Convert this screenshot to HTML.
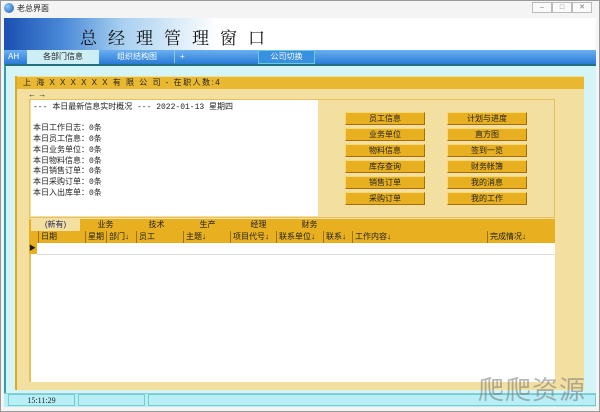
<!DOCTYPE html>
<html><head><meta charset="utf-8"><style>
*{margin:0;padding:0;box-sizing:border-box}
body{width:600px;height:412px;background:#f0f0f0;position:relative;overflow:hidden;font-family:"Liberation Sans","Noto Sans CJK SC",sans-serif;font-size:9px;color:#222}
.a{position:absolute}
.btn{position:absolute;width:80px;height:13px;background:#e8b020;border-right:1px solid #a07010;border-bottom:1px solid #a07010;border-top:1px solid #f8d870;border-left:1px solid #f8d870;text-align:center;line-height:11px;font-size:8px;color:#222}
.hc{position:absolute;top:0;height:12px;border-left:1px solid #a07010;line-height:12px;font-size:8px;padding-left:2px}
.tb{position:absolute;top:0;height:12px;line-height:12px;text-align:center;font-size:8px;background:#e8b020}
.wc{position:absolute;top:2px;width:20px;height:11px;border:1px solid #bbb;background:#fafafa;font-size:7px;color:#777;text-align:center;line-height:9px}
</style></head><body>
<div class="a" style="left:0;top:0;width:600px;height:412px;border:1px solid #999;background:#f4f4f4"></div>
<div class="a" style="left:4px;top:3px;width:10px;height:10px;border-radius:50%;background:radial-gradient(circle at 35% 35%,#8cf,#25a)"></div>
<div class="a" style="left:17px;top:3px;font-size:8px">老总界面</div>
<div class="wc" style="left:532px">–</div><div class="wc" style="left:552px">□</div><div class="wc" style="left:572px">✕</div>
<div class="a" style="left:4px;top:18px;width:592px;height:32px;background:linear-gradient(90deg,#1a4fb0 0%,#4a8ad8 10%,#a8d0f0 20%,#ffffff 36%,#ffffff 100%)"></div>
<div class="a" style="left:80px;top:24px;font-family:'Liberation Serif','Noto Serif CJK SC',serif;font-size:17px;letter-spacing:11px;color:#111">总经理管理窗口</div>
<div class="a" style="left:4px;top:50px;width:592px;height:14px;background:linear-gradient(#6ab0f0,#2a7ad8)"></div>
<div class="a" style="left:8px;top:52px;font-size:8px;color:#fff">AH</div>
<div class="a" style="left:27px;top:50px;width:72px;height:14px;background:#cdeef5;text-align:center;line-height:14px;font-size:8px">各部门信息</div>
<div class="a" style="left:100px;top:51px;width:75px;height:12px;text-align:center;line-height:12px;font-size:8px;color:#fff;border-right:1px solid #8cc">组织结构图</div>
<div class="a" style="left:180px;top:52px;font-size:8px;color:#fff">+</div>
<div class="a" style="left:258px;top:50px;width:57px;height:14px;background:#3a90e0;border:1px solid #6cd;text-align:center;line-height:12px;font-size:8px;color:#fff">公司切换</div>
<div class="a" style="left:4px;top:64px;width:592px;height:329px;background:#d4f4f6;border-top:2px solid #207080;border-left:2px solid #30a0b0"></div>
<div class="a" style="left:15px;top:76px;width:569px;height:314px;background:#f3e0a0;border-left:2px solid #e0a820"></div>
<div class="a" style="left:17px;top:77px;width:567px;height:12px;background:#e8b830;font-size:8px;line-height:12px;padding-left:6px;letter-spacing:1.5px">上 海 X X X X X X 有 限 公 司 - 在职人数:4</div>
<div class="a" style="left:28px;top:90px;font-size:8px">← →</div>
<div class="a" style="left:29px;top:99px;width:526px;height:119px;border:1px solid #e8c060;background:#f3e0a0"></div>
<div class="a" style="left:31px;top:100px;width:287px;height:116px;background:#fff;font-family:'Liberation Mono','Noto Sans CJK SC',monospace;font-size:8px;line-height:10.7px;padding:3px 2px">--- 本日最新信息实时概况 ---  2022-01-13 星期四<br><br>本日工作日志：0条<br>本日员工信息：0条<br>本日业务单位：0条<br>本日物料信息：0条<br>本日销售订单：0条<br>本日采购订单：0条<br>本日入出库单：0条</div>
<div class="btn" style="left:345px;top:112px">员工信息</div><div class="btn" style="left:447px;top:112px">计划与进度</div>
<div class="btn" style="left:345px;top:128px">业务单位</div><div class="btn" style="left:447px;top:128px">直方图</div>
<div class="btn" style="left:345px;top:144px">物料信息</div><div class="btn" style="left:447px;top:144px">签到一览</div>
<div class="btn" style="left:345px;top:160px">库存查询</div><div class="btn" style="left:447px;top:160px">财务帐簿</div>
<div class="btn" style="left:345px;top:176px">销售订单</div><div class="btn" style="left:447px;top:176px">我的消息</div>
<div class="btn" style="left:345px;top:192px">采购订单</div><div class="btn" style="left:447px;top:192px">我的工作</div>
<div class="a" style="left:29px;top:219px;width:526px;height:12px;background:#e8b020">
<div class="tb" style="left:2px;width:49px;background:#f3e0a0;color:#226">(新有)</div>
<div class="tb" style="left:51px;width:51px">业务</div><div class="tb" style="left:102px;width:51px">技术</div><div class="tb" style="left:153px;width:51px">生产</div><div class="tb" style="left:204px;width:51px">经理</div><div class="tb" style="left:255px;width:51px">财务</div></div>
<div class="a" style="left:29px;top:231px;width:526px;height:12px;background:#e8b020">
<div class="hc" style="left:9px">日期</div><div class="hc" style="left:56px">星期</div><div class="hc" style="left:77px">部门↓</div><div class="hc" style="left:107px">员工</div><div class="hc" style="left:154px">主题↓</div><div class="hc" style="left:201px">项目代号↓</div><div class="hc" style="left:247px">联系单位↓</div><div class="hc" style="left:294px">联系↓</div><div class="hc" style="left:323px">工作内容↓</div><div class="hc" style="left:458px">完成情况↓</div></div>
<div class="a" style="left:29px;top:243px;width:526px;height:139px;background:#fff;border-left:2px solid #e8c060"></div>
<div class="a" style="left:29px;top:243px;width:8px;height:11px;background:#e8b020;font-size:7px;line-height:11px">▶</div>
<div class="a" style="left:37px;top:254px;width:518px;height:1px;background:#ddd"></div>
<div class="a" style="left:4px;top:393px;width:592px;height:14px;background:#b8eef6;border-top:1px solid #8cd"></div>
<div class="a" style="left:8px;top:394px;width:67px;height:12px;border:1px solid #7cc;font-family:'Liberation Serif',serif;font-size:8px;text-align:center;line-height:11px">15:11:29</div>
<div class="a" style="left:78px;top:394px;width:67px;height:12px;border:1px solid #7cc"></div>
<div class="a" style="left:148px;top:394px;width:448px;height:12px;border:1px solid #7cc"></div>
<div class="a" style="left:478px;top:370px;font-size:26px;color:rgba(120,120,120,.55);letter-spacing:1px">爬爬资源</div>
</body></html>
